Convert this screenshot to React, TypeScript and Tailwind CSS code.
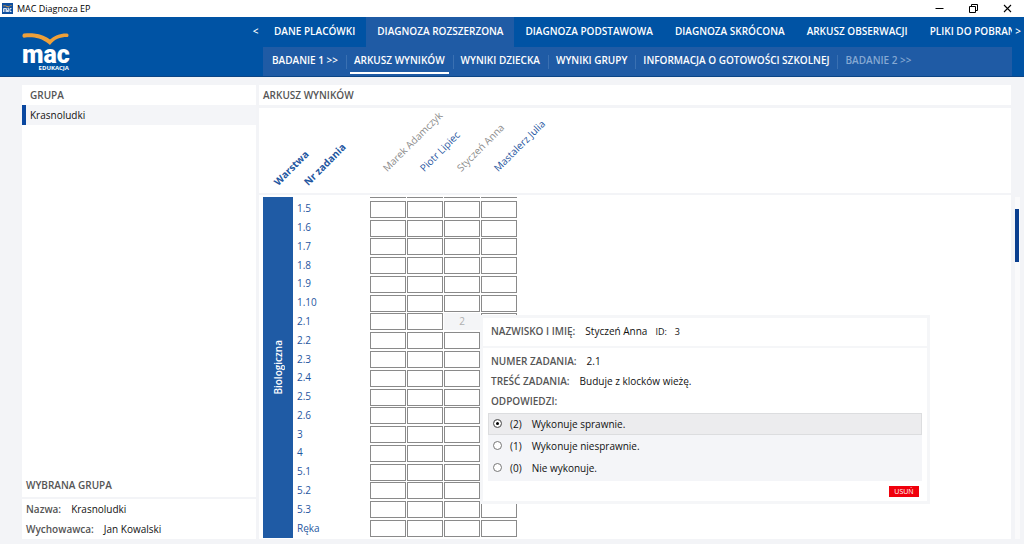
import { Fragment, useState } from 'react';

const TABS = [
  'DANE PLACÓWKI',
  'DIAGNOZA ROZSZERZONA',
  'DIAGNOZA PODSTAWOWA',
  'DIAGNOZA SKRÓCONA',
  'ARKUSZ OBSERWACJI',
  'PLIKI DO POBRANIA',
];

const SUB_TABS = [
  { label: 'BADANIE 1 >>' },
  { label: 'ARKUSZ WYNIKÓW' },
  { label: 'WYNIKI DZIECKA' },
  { label: 'WYNIKI GRUPY' },
  { label: 'INFORMACJA O GOTOWOŚCI SZKOLNEJ' },
  { label: 'BADANIE 2 >>', disabled: true },
];

const CHILDREN = [
  { name: 'Marek Adamczyk', muted: true },
  { name: 'Piotr Lipiec' },
  { name: 'Styczeń Anna', muted: true },
  { name: 'Mastalerz Julia' },
];

const TASKS = [
  '1.5', '1.6', '1.7', '1.8', '1.9', '1.10',
  '2.1', '2.2', '2.3', '2.4', '2.5', '2.6',
  '3', '4', '5.1', '5.2', '5.3', 'Ręka',
];

const ANSWERS = [
  { value: '2', label: 'Wykonuje sprawnie.' },
  { value: '1', label: 'Wykonuje niesprawnie.' },
  { value: '0', label: 'Nie wykonuje.' },
];

function Gull({ className }: { className: string }) {
  return (
    <svg viewBox="0 0 47 12" className={className} aria-hidden="true">
      <path
        d="M2 .6C5 .2 9 .1 12 .4c7 .7 12.500 3 16 6.100C31.500 3 38 .2 45 .4c2 .1 2 3.400 0 3.600-7 0-12.500 2-17 8C22.500 7 16 4.600 10 4.300 7 4.200 4.500 4.400 2 4.700 0 4.800 0 .9 2 .6z"
        fill="#eea03a"
      />
    </svg>
  );
}

function TitleBar() {
  return (
    <div className="flex h-[17px] shrink-0 items-center bg-white pl-0.5">
      <div className="flex size-[11px] flex-col items-center justify-center bg-[#0f4f9f]">
        <Gull className="h-[3px] w-[9px]" />
        <svg viewBox="0 0 9 4" className="h-1 w-[9px]" aria-hidden="true">
          <path d="M.5 4V.5h3V4M2 .5V4M4.500 .5h1.200V4H4.500V2h1M8.500 .5H7V3.500h1.500" fill="none" stroke="#fff" strokeWidth=".8" />
        </svg>
      </div>
      <span className="ml-1 text-[9px] leading-4 text-black">MAC Diagnoza EP</span>
      <div className="ml-auto flex gap-[25px] pr-3 text-black">
        <button aria-label="Minimalizuj">
          <svg viewBox="0 0 9 9" className="size-[9px]"><path d="M.5 4.500h8" stroke="currentColor" /></svg>
        </button>
        <button aria-label="Przywróć">
          <svg viewBox="0 0 9 9" className="size-[9px]">
            <path d="M.5 2.500h6v6h-6zM2.500 2.500v-2h6v6h-2" fill="none" stroke="currentColor" />
          </svg>
        </button>
        <button aria-label="Zamknij">
          <svg viewBox="0 0 9 9" className="size-[9px]"><path d="M1 1l7 7M8 1l-7 7" stroke="currentColor" strokeWidth="1.100" /></svg>
        </button>
      </div>
    </div>
  );
}

function Header() {
  const [tab, setTab] = useState(1);
  const [subTab, setSubTab] = useState(1);

  return (
    <header className="flex h-[60px] shrink-0 border-b border-[#0b4586] bg-[#0053a4] text-[10px] leading-4 font-semibold text-white">
      <div className="w-[248px] shrink-0 pt-4 pl-[22px]">
        <div className="w-[47px]">
          <Gull className="h-3 w-[47px]" />
          <div className="font-[Roboto,sans-serif] text-[25px] leading-5 font-black">mac</div>
          <div className="text-right text-[6px] leading-[7px] font-bold">EDUKACJA</div>
        </div>
      </div>
      <div className="flex min-w-0 flex-1 flex-col">
        <nav className="flex h-[30px] items-stretch">
          <button className="w-[15px] shrink-0 pb-0.5" aria-label="Poprzednie">&lt;</button>
          <div className="flex min-w-0 flex-1 overflow-hidden">
            {TABS.map((label, i) => (
              <button
                key={label}
                onClick={() => setTab(i)}
                className={`shrink-0 px-[11px] pb-0.5 whitespace-nowrap ${i === tab ? 'bg-[#1f5ba5]' : ''}`}
              >
                {label}
              </button>
            ))}
          </div>
          <button className="w-3 shrink-0 pb-0.5" aria-label="Następne">&gt;</button>
        </nav>
        <nav className="mr-3 ml-[15px] flex flex-1 items-center bg-[#1f5ba5] pl-[5px]">
          {SUB_TABS.map((s, i) => (
            <Fragment key={s.label}>
              {i > 0 && <span className="mr-[3px] ml-1 h-3.5 w-px bg-[#3a70b2]" />}
              <button
                disabled={s.disabled}
                onClick={() => setSubTab(i)}
                className={`border-b-2 px-1 pt-0.5 pb-1 whitespace-nowrap ${
                  i === subTab ? 'border-white' : 'border-transparent'
                } ${s.disabled ? 'text-[#86a9d3]' : ''}`}
              >
                {s.label}
              </button>
            </Fragment>
          ))}
        </nav>
      </div>
    </header>
  );
}

function Sidebar() {
  return (
    <aside className="flex w-[234px] shrink-0 flex-col bg-white text-[10px]">
      <h2 className="h-5 pl-2 leading-5 font-semibold text-[#555]">GRUPA</h2>
      <button className="h-5 border-l-4 border-[#0a48a0] bg-[#f4f5f8] pl-1 text-left text-[#111]">Krasnoludki</button>
      <h2 className="mt-auto border-b-2 border-[#f3f4f7] pl-1 leading-6 font-semibold text-[#555]">WYBRANA GRUPA</h2>
      <dl className="pl-1 leading-5">
        <div className="flex gap-2.5">
          <dt className="font-semibold text-[#555]">Nazwa:</dt>
          <dd className="text-[#111]">Krasnoludki</dd>
        </div>
        <div className="flex gap-2.5">
          <dt className="font-semibold text-[#555]">Wychowawca:</dt>
          <dd className="text-[#111]">Jan Kowalski</dd>
        </div>
      </dl>
    </aside>
  );
}

function AnswerPopup({ answer, onAnswer }: { answer: string; onAnswer: (v: string) => void }) {
  return (
    <div className="absolute top-0.5 left-full z-10 w-[450px] border-3 border-[#f5f6f8] bg-white text-left text-[10px] text-[#111]">
      <div className="flex h-[30px] items-center border-b-2 border-[#f5f6f8] pl-2">
        <span className="font-semibold text-[#555]">NAZWISKO I IMIĘ:</span>
        <span className="ml-2.5">Styczeń Anna</span>
        <span className="ml-2 text-[9px]">ID:</span>
        <span className="ml-2 text-[9px]">3</span>
      </div>
      <div className="px-[5px] pt-[3px]">
        <div className="pl-[3px] leading-5">
          <p><span className="mr-2.5 font-semibold text-[#555]">NUMER ZADANIA:</span>2.1</p>
          <p><span className="mr-2.5 font-semibold text-[#555]">TREŚĆ ZADANIA:</span>Buduje z klocków wieżę.</p>
          <p className="font-semibold text-[#555]">ODPOWIEDZI:</p>
        </div>
        <div className="mt-0.5 bg-[#f4f5f8] pb-0.5">
          {ANSWERS.map((a) => (
            <label
              key={a.value}
              className={`flex items-center border pl-1 leading-5 ${
                a.value === answer ? 'border-[#dcdddf] bg-[#ececee]' : 'border-transparent'
              }`}
            >
              <input
                type="radio"
                name="answer"
                checked={a.value === answer}
                onChange={() => onAnswer(a.value)}
                className="size-[9px] appearance-none rounded-full border border-[#777] bg-white checked:bg-black checked:shadow-[inset_0_0_0_2px_white]"
              />
              <span className="ml-2">({a.value})</span>
              <span className="ml-2.5">{a.label}</span>
            </label>
          ))}
        </div>
        <div className="flex justify-end pt-[5px] pr-[3px] pb-1">
          <button onClick={() => onAnswer('')} className="h-[11px] w-[30px] bg-[#f0000c] text-[7px] leading-[11px] text-white">
            USUŃ
          </button>
        </div>
      </div>
    </div>
  );
}

function ResultsTable() {
  const [answer, setAnswer] = useState('2');

  return (
    <table className="h-full w-full table-fixed text-[10px] text-[#1f56a0]">
      <colgroup>
        <col className="w-1" />
        <col className="w-[30px]" />
        <col className="w-[76px]" />
        {CHILDREN.map((c) => <col key={c.name} className="w-[37px]" />)}
        <col />
      </colgroup>
      <thead>
        <tr className="h-[86px] border-b-2 border-[#f3f4f7]">
          <td />
          <th className="relative p-0">
            <span className="absolute bottom-1 left-[18px] origin-bottom-left -rotate-45 leading-4 font-bold">Warstwa</span>
          </th>
          <th className="relative p-0">
            <span className="absolute bottom-1 left-[18px] origin-bottom-left -rotate-45 leading-4 font-bold whitespace-nowrap">Nr zadania</span>
          </th>
          {CHILDREN.map((c) => (
            <th key={c.name} className="relative p-0">
              <span
                className={`absolute bottom-[18px] left-[21px] origin-bottom-left -rotate-45 leading-4 font-normal whitespace-nowrap ${
                  c.muted ? 'text-[#8c8c8c]' : ''
                }`}
              >
                {c.name}
              </span>
            </th>
          ))}
          <td />
        </tr>
      </thead>
      <tbody>
        {/* gap under the header */}
        <tr className="h-[3px]"><td /></tr>
        {/* bottom edge of the row scrolled out of view */}
        <tr className="h-[3px]">
          <td />
          <th rowSpan={TASKS.length + 1} className="bg-[#1f5ba5] p-0 font-semibold text-white">
            <span className="inline-block rotate-180 align-middle [writing-mode:vertical-rl]">Biologiczna</span>
          </th>
          <td />
          {CHILDREN.map((c) => (
            <td key={c.name} className="p-0 align-top">
              <div className="ml-px h-px w-9 bg-[#8a8a8a]" />
            </td>
          ))}
        </tr>
        {TASKS.map((task) => (
          <tr key={task}>
            <td />
            <th className="p-0 pb-0.5 pl-1 text-left leading-4 font-normal">{task}</th>
            {CHILDREN.map((c) => {
              const active = task === '2.1' && c.name === 'Styczeń Anna';
              return (
                <td key={c.name} className="relative p-0">
                  <button
                    aria-label={`${c.name}, zadanie ${task}`}
                    className={`ml-px block h-[17px] w-9 ${
                      active ? 'bg-[#f4f5f7] text-[#b0b0b0]' : 'border border-[#8a8a8a] bg-white'
                    }`}
                  >
                    {active ? answer : ''}
                  </button>
                  {active && <AnswerPopup answer={answer} onAnswer={setAnswer} />}
                </td>
              );
            })}
          </tr>
        ))}
      </tbody>
      <tfoot><tr className="h-px"><td /></tr></tfoot>
    </table>
  );
}

export default function App() {
  return (
    <div className="flex h-screen flex-col overflow-hidden bg-[#f3f4f7] font-['Open_Sans','Noto_Sans',sans-serif]">
      <TitleBar />
      <Header />
      <div className="flex min-h-0 flex-1 gap-[3px] pt-2 pb-[5px] pl-[22px]">
        <Sidebar />
        <main className="flex min-w-0 flex-1 flex-col gap-[3px]">
          <h1 className="h-5 bg-white pl-1 text-[10px] leading-5 font-semibold text-[#555]">ARKUSZ WYNIKÓW</h1>
          <div className="min-h-0 flex-1 bg-white">
            <ResultsTable />
          </div>
        </main>
        {/* scrollbar */}
        <div className="mt-[112px] mr-1 ml-px w-[5px] bg-[#fafafb] pt-3">
          <div className="h-[53px] w-1 bg-[#0a3f8f]" />
        </div>
      </div>
    </div>
  );
}
